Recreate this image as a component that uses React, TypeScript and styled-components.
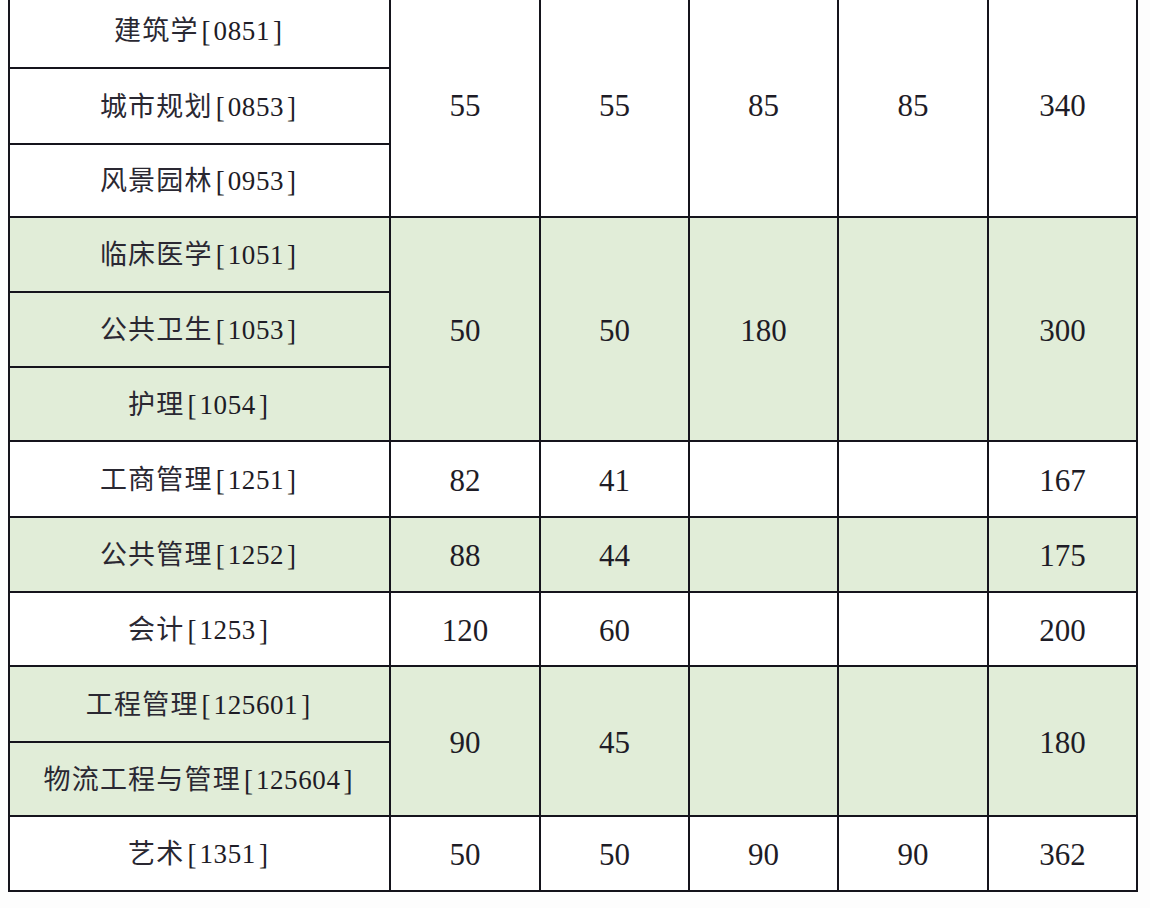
import React from "react";
import styled, { createGlobalStyle } from "styled-components";

const Global = createGlobalStyle`
  html, body { margin: 0; padding: 0; background: #fdfdfd; overflow: hidden; }
  #root { width: 1150px; height: 908px; }
`;

const Page = styled.div`
  width: 1150px;
  height: 908px;
  padding-left: 8px;
  box-sizing: border-box;
  overflow: hidden;
`;

const Table = styled.table`
  border-collapse: collapse;
  table-layout: fixed;
  width: 1130px;
  margin-top: -9px;
  font-family: "Liberation Serif", "Noto Sans CJK SC", serif;
  color: #1e1c26;
`;

const Cell = styled.td<{ $green?: boolean; $label?: boolean }>`
  border: 2px solid #15141c;
  padding: 0;
  text-align: center;
  vertical-align: middle;
  background: ${(p) => (p.$green ? "#e1edd8" : "#ffffff")};
  font-size: ${(p) => (p.$label ? "27px" : "31px")};
  line-height: 1;
  white-space: nowrap;
  padding-top: 2px;
`;

const Name = styled.span`
  color: #2a2832;
  letter-spacing: 1.2px;
`;

const Bracket = styled.span`
  display: inline-block;
  margin: 0 3px;
  transform: scaleY(1.08);
`;

const Code = styled.span`
  letter-spacing: 0.6px;
`;

type Group = {
  labels: [string, string][];
  values: string[];
  green: boolean;
};

const groups: Group[] = [
  { labels: [["建筑学", "0851"], ["城市规划", "0853"], ["风景园林", "0953"]], values: ["55", "55", "85", "85", "340"], green: false },
  { labels: [["临床医学", "1051"], ["公共卫生", "1053"], ["护理", "1054"]], values: ["50", "50", "180", "", "300"], green: true },
  { labels: [["工商管理", "1251"]], values: ["82", "41", "", "", "167"], green: false },
  { labels: [["公共管理", "1252"]], values: ["88", "44", "", "", "175"], green: true },
  { labels: [["会计", "1253"]], values: ["120", "60", "", "", "200"], green: false },
  { labels: [["工程管理", "125601"], ["物流工程与管理", "125604"]], values: ["90", "45", "", "", "180"], green: true },
  { labels: [["艺术", "1351"]], values: ["50", "50", "90", "90", "362"], green: false },
];

const rowHeights = [76, 76, 73, 75, 75, 74, 76, 75, 74, 76, 74, 75];
const colWidths = [381, 150, 149, 149, 150, 149];

export default function App() {
  let rowIndex = 0;
  const rows: React.ReactNode[] = [];
  groups.forEach((g, gi) => {
    g.labels.forEach(([name, code], li) => {
      const h = rowHeights[rowIndex++];
      rows.push(
        <tr key={`${gi}-${li}`} style={{ height: h }}>
          <Cell $green={g.green} $label>
            <Name>{name}</Name>
            <Bracket>[</Bracket>
            <Code>{code}</Code>
            <Bracket>]</Bracket>
          </Cell>
          {li === 0 &&
            g.values.map((v, vi) => (
              <Cell key={vi} $green={g.green} rowSpan={g.labels.length}>
                {v}
              </Cell>
            ))}
        </tr>
      );
    });
  });
  return (
    <>
      <Global />
      <Page>
        <Table>
          <colgroup>
            {colWidths.map((w, i) => (
              <col key={i} style={{ width: w }} />
            ))}
          </colgroup>
          <tbody>{rows}</tbody>
        </Table>
      </Page>
    </>
  );
}
